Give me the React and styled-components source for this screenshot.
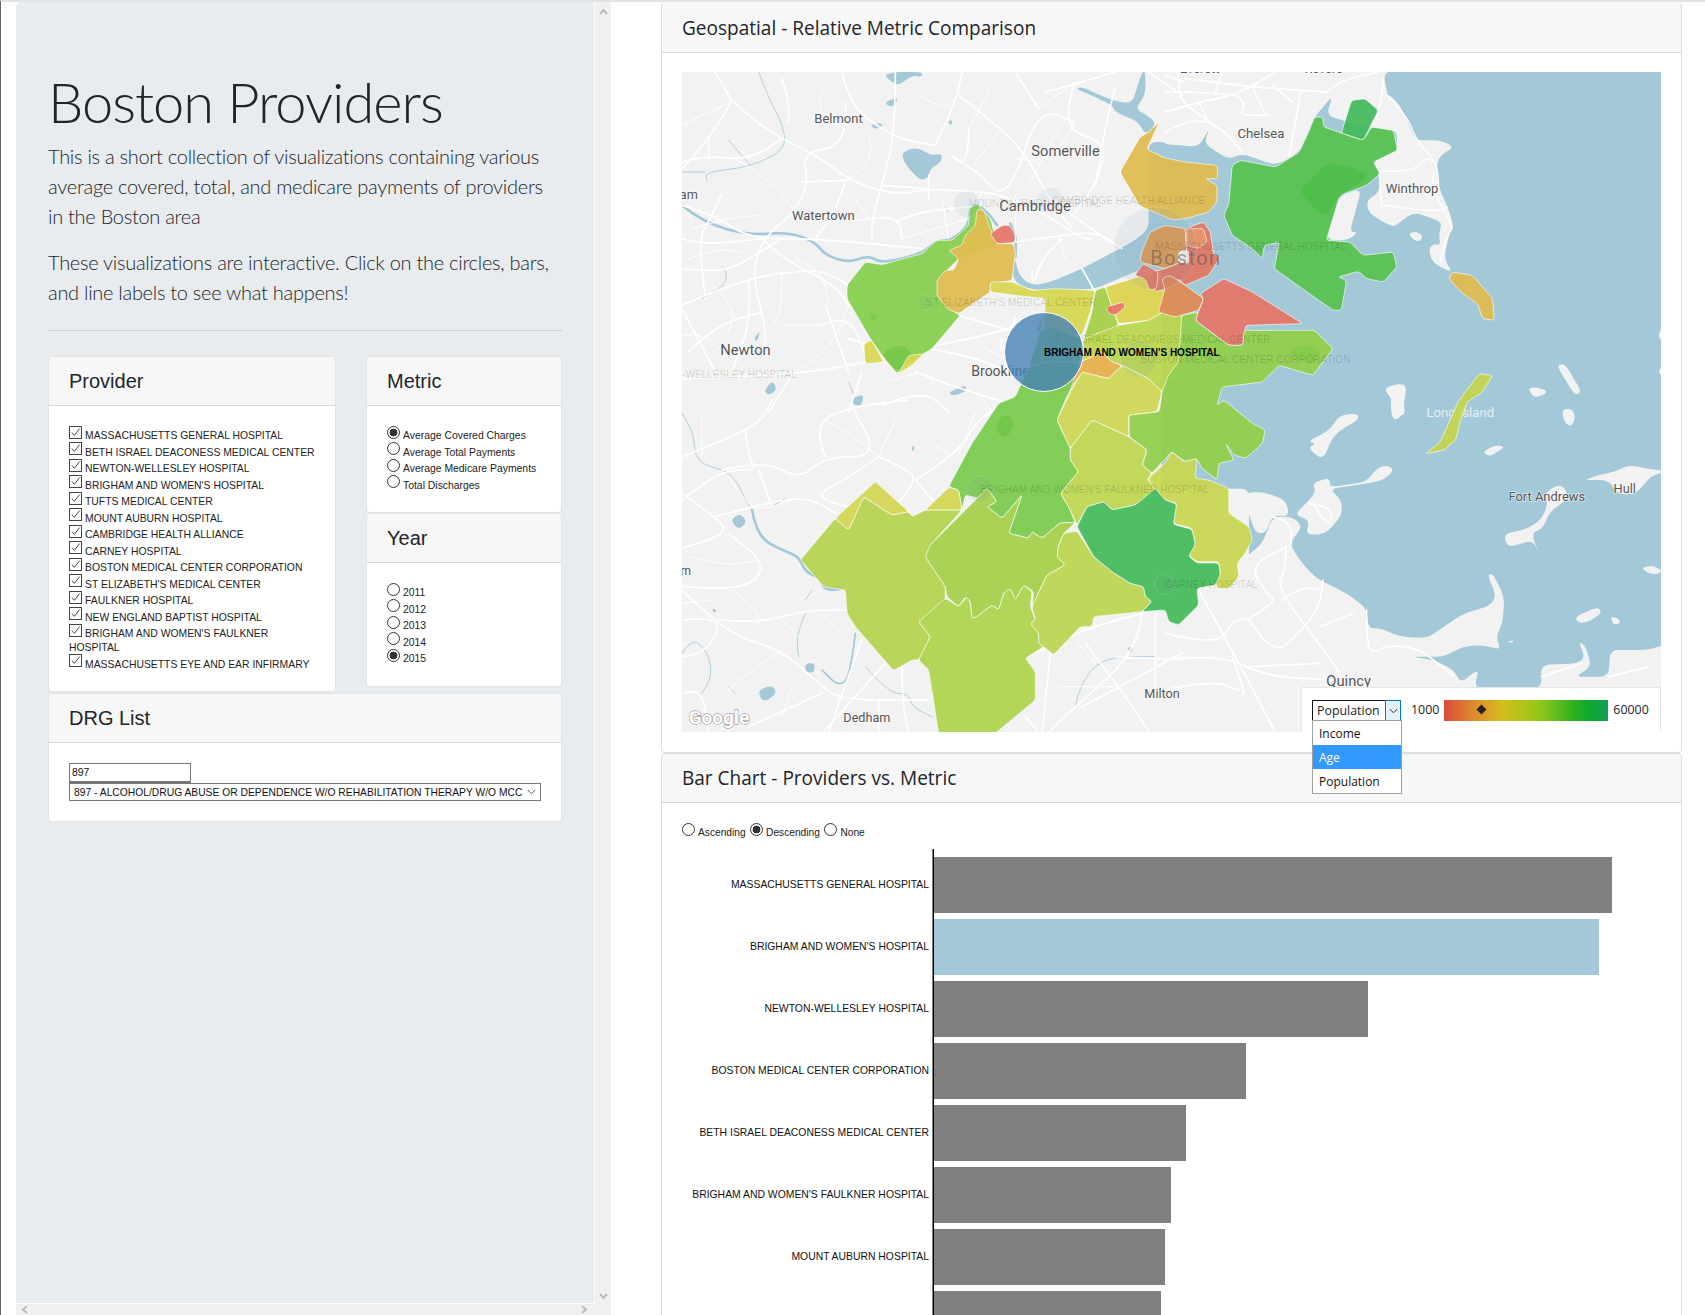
import React from "react";
import styled, { createGlobalStyle } from "styled-components";

const Global = createGlobalStyle`
  html, body { margin: 0; padding: 0; background: #fff; }
  body { font-family: "Liberation Sans", Arial, sans-serif; color: #212529; }
`;

const Page = styled.div`
  display: flex;
  width: 1705px;
  height: 1315px;
  box-sizing: border-box;
  overflow: hidden;
  border-left: 1px solid #666;
  border-top: 2px solid #e3e3e3;
  background: #fff;
`;

const LeftPane = styled.div`
  display: grid;
  grid-template-columns: 579px 16px;
  grid-template-rows: 1302px 11px;
  margin-left: 15px;
  flex: none;
`;

const Jumbotron = styled.div`
  background: #e9ecef;
  border-right: 1px solid #fff;
  border-bottom: 1px solid #fff;
  border-top-left-radius: 5px;
  padding: 66px 32px 0;
  box-sizing: border-box;
  min-width: 0;
`;

const Title = styled.h1`
  margin: 0;
  font-family: Lato, sans-serif;
  font-weight: 300;
  font-size: 56px;
  letter-spacing: -1px;
  line-height: 67px;
  height: 73px;
  color: #212529;
`;

const Lead = styled.p`
  margin: 0 0 16px;
  font-family: Lato, sans-serif;
  font-weight: 300;
  font-size: 20px;
  letter-spacing: -0.28px;
  line-height: 30px;
  color: #212529;
`;

const Rule = styled.hr`
  border: 0;
  border-top: 1px solid #cdd1d5;
  margin: 23px 0 25px;
`;

const Columns = styled.div`
  display: grid;
  grid-template-columns: 288px 196px;
  column-gap: 30px;
  align-items: start;
  margin-bottom: 1px;
`;

const Stack = styled.div`
  display: flex;
  flex-direction: column;
`;

const Card = styled.section`
  background: #fff;
  border: 1px solid rgba(0, 0, 0, 0.11);
  border-radius: 4px;
  box-sizing: border-box;
`;

const CardHead = styled.header`
  background: #f7f7f7;
  border-bottom: 1px solid rgba(0, 0, 0, 0.125);
  height: 48px;
  padding: ${(p) => (p.$tall ? "2px 20px 0" : "0 20px")};
  margin-top: ${(p) => (p.$tall ? "-1px" : "0")};
  display: flex;
  align-items: center;
  font-family: ${(p) => (p.$segoe ? '"Open Sans", sans-serif' : '"Liberation Sans", sans-serif')};
  font-size: ${(p) => (p.$segoe ? "19.05px" : "20px")};
  border-top-left-radius: 3px;
  border-top-right-radius: 3px;
  color: #212529;
`;

const CardBody = styled.div`
  padding: 20px;
`;

const OptionRow = styled.div`
  font-size: 10.4px;
  line-height: 14px;
  margin-right: -2px;
  color: #222;
`;

const Box = styled.span`
  display: inline-block;
  width: 13px;
  height: 13px;
  box-sizing: border-box;
  border: 1px solid #444;
  background: #fff;
  margin: -0.5px 3px 0 0;
  position: relative;
  svg { position: absolute; left: 0; top: 0; display: block; }
`;

const Radio = styled.span`
  display: inline-block;
  width: 13px;
  height: 13px;
  box-sizing: border-box;
  border: 1px solid #333;
  border-radius: 50%;
  background: ${(p) => (p.$on ? "radial-gradient(circle, #333 0 3.6px, #fff 4.2px)" : "#fff")};
  margin: -0.5px 3px 0 0;
`;

const TextInput = styled.input`
  display: block;
  width: 122px;
  height: 20px;
  box-sizing: border-box;
  border: 1px solid #767676;
  border-bottom-width: 2px;
  padding: 0 2px;
  font: 10.4px "Liberation Sans", sans-serif;
  color: #111;
  outline: 0;
`;

const FakeSelect = styled.div`
  display: flex;
  align-items: center;
  justify-content: space-between;
  width: 472px;
  height: 18px;
  box-sizing: border-box;
  border: 1px solid #767676;
  padding: 0 4px;
  font-size: 10.3px;
  white-space: nowrap;
  color: #111;
`;

const VScroll = styled.div`
  background: #f0f0f0;
  display: flex;
  flex-direction: column;
  justify-content: space-between;
  align-items: center;
  padding: 6px 0 4px;
  box-sizing: border-box;
`;

const HScroll = styled.div`
  grid-column: 1 / span 2;
  background: #f0f0f0;
  display: flex;
  justify-content: space-between;
  align-items: center;
  padding: 0 23px 0 5px;
  height: 11px;
  box-sizing: border-box;
`;

const RightPane = styled.div`
  margin-left: 50px;
  width: 1021px;
  flex: none;
  display: flex;
  flex-direction: column;
`;

const ChartCard = styled(Card)`
  border-color: rgba(0, 0, 0, 0.13);
`;

const MapFrame = styled.div`
  position: relative;
  width: 979px;
  height: 660px;
  margin-top: -1px;
  background: #f2f2f2;
  svg { display: block; }
`;

const Town = styled.text`
  font-family: Roboto, sans-serif;
  font-size: ${(p) => p.$s || 36}px;
  letter-spacing: ${(p) => p.$ls || 0}px;
  fill: ${(p) => p.$c || "#555"};
  paint-order: stroke;
  stroke: ${(p) => (p.$halo === false ? "none" : "rgba(255,255,255,.6)")};
  stroke-width: 5px;
`;

const Ghost = styled.text`
  font-family: "Liberation Sans", sans-serif;
  font-size: 30px;
  letter-spacing: 0.1px;
  fill: rgba(0, 0, 0, 0.16);
`;

const MainLabel = styled.text`
  font-family: "Liberation Sans", sans-serif;
  font-weight: 700;
  font-size: 10px;
  fill: #000;
`;

const Legend = styled.div`
  position: absolute;
  right: 0;
  bottom: 0;
  width: 360px;
  height: 45px;
  box-sizing: border-box;
  background: #fff;
  border: 1px solid #e6e6e6;
  border-bottom: 0;
  padding: 12px 0 0 10px;
  display: flex;
  align-items: flex-start;
  font-family: "Open Sans", sans-serif;
  font-size: 12.4px;
  color: #222;
`;

const PickWrap = styled.div`
  position: relative;
  width: 89px;
  margin-right: 10px;
`;

const Pick = styled.div`
  display: flex;
  height: 21px;
  box-sizing: border-box;
  border: 1px solid #111;
  line-height: 20px;
`;

const PickText = styled.span`
  flex: 1;
  padding-left: 4px;
`;

const PickArrow = styled.span`
  width: 16px;
  margin: -1px -1px -1px 0;
  box-sizing: border-box;
  border: 1px solid #0078d7;
  background: #e5f1fb;
  display: flex;
  align-items: center;
  justify-content: center;
`;

const DropList = styled.ul`
  position: absolute;
  left: 0;
  top: 20px;
  margin: 0;
  padding: 0;
  width: 90px;
  box-sizing: border-box;
  border: 1px solid #a0a0a0;
  background: #fff;
  list-style: none;
  z-index: 3;
`;

const DropItem = styled.li`
  height: 24px;
  line-height: 25px;
  padding-left: 6px;
  font-size: 12px;
  background: ${(p) => (p.$on ? "#3399ff" : "#fff")};
  color: ${(p) => (p.$on ? "#fff" : "#111")};
`;

const LegendValue = styled.span`
  line-height: 19px;
  margin-right: ${(p) => p.$gap}px;
`;

const Ramp = styled.div`
  position: relative;
  width: 164px;
  height: 21px;
  margin-right: 5px;
  background: linear-gradient(to right, #de4b3b 0%, #dc8a2c 18%, #d3bf1b 36%, #93c71c 58%, #2cb01e 80%, #10a92a 88%, #0e9f58 100%);
`;

const Diamond = styled.span`
  position: absolute;
  left: 34px;
  top: 6px;
  width: 7px;
  height: 7px;
  background: #222;
  transform: rotate(45deg);
`;

const SortRow = styled.div`
  display: flex;
  gap: 4.5px;
  font-size: 10.2px;
  line-height: 14px;
  height: 17px;
  color: #222;
`;

const ChartSvg = styled.svg`
  display: block;
  margin-top: 9px;
  overflow: hidden;
`;

const BarLabel = styled.text`
  font-family: "Liberation Sans", sans-serif;
  font-size: 10.4px;
  fill: #111;
`;

const Arrow = ({ d }) => (
  <svg width="9" height="7" viewBox="0 0 9 7">
    <path d={d} fill="none" stroke="#bdbdbd" strokeWidth="2" />
  </svg>
);

const Tick = () => (
  <svg width="11" height="11" viewBox="0 0 11 11">
    <path d="M1.8 5.6 L4.4 8.3 L9.6 1.6" fill="none" stroke="#444" strokeWidth="1" />
  </svg>
);

const Chevron = ({ c = "#333" }) => (
  <svg width="9" height="6" viewBox="0 0 9 6">
    <path d="M.8 1 L4.5 4.8 L8.2 1" fill="none" stroke={c} strokeWidth="1" />
  </svg>
);

const providers = [
  "MASSACHUSETTS GENERAL HOSPITAL",
  "BETH ISRAEL DEACONESS MEDICAL CENTER",
  "NEWTON-WELLESLEY HOSPITAL",
  "BRIGHAM AND WOMEN'S HOSPITAL",
  "TUFTS MEDICAL CENTER",
  "MOUNT AUBURN HOSPITAL",
  "CAMBRIDGE HEALTH ALLIANCE",
  "CARNEY HOSPITAL",
  "BOSTON MEDICAL CENTER CORPORATION",
  "ST ELIZABETH'S MEDICAL CENTER",
  "FAULKNER HOSPITAL",
  "NEW ENGLAND BAPTIST HOSPITAL",
  "BRIGHAM AND WOMEN'S FAULKNER HOSPITAL",
  "MASSACHUSETTS EYE AND EAR INFIRMARY",
];
const metrics = ["Average Covered Charges", "Average Total Payments", "Average Medicare Payments", "Total Discharges"];
const years = ["2011", "2012", "2013", "2014", "2015"];
const bars = [
  ["MASSACHUSETTS GENERAL HOSPITAL", 1612],
  ["BRIGHAM AND WOMEN'S HOSPITAL", 1599, true],
  ["NEWTON-WELLESLEY HOSPITAL", 1368],
  ["BOSTON MEDICAL CENTER CORPORATION", 1246],
  ["BETH ISRAEL DEACONESS MEDICAL CENTER", 1186],
  ["BRIGHAM AND WOMEN'S FAULKNER HOSPITAL", 1171],
  ["MOUNT AUBURN HOSPITAL", 1165],
  ["", 1161],
];

const T = {
  nw: "scale(.33333)",
  ne: "translate(483 0) scale(.336 .33333)",
  sw: "translate(0 328) scale(.33333)",
  se: "translate(483 328) scale(.336 .33333)",
};

const WATER = "#a3c9d8";
const LAND = "#f2f2f2";

const parse = (s) => s.trim().split(/\s+/).map((p) => p.split(",").map(Number));

/* closed outline with its corners rounded by at most r units */
const outline = (s, r) => {
  const pts = parse(s);
  const n = pts.length;
  let d = "";
  pts.forEach((p, i) => {
    const a = pts[(i + n - 1) % n];
    const b = pts[(i + 1) % n];
    const la = Math.hypot(a[0] - p[0], a[1] - p[1]) || 1;
    const lb = Math.hypot(b[0] - p[0], b[1] - p[1]) || 1;
    const ra = Math.min(r, la * 0.45) / la;
    const rb = Math.min(r, lb * 0.45) / lb;
    const s0 = [p[0] + (a[0] - p[0]) * ra, p[1] + (a[1] - p[1]) * ra];
    const s1 = [p[0] + (b[0] - p[0]) * rb, p[1] + (b[1] - p[1]) * rb];
    d += `${i ? "L" : "M"}${s0[0]},${s0[1]} Q${p[0]},${p[1]} ${s1[0]},${s1[1]} `;
  });
  return d + "Z";
};

/* open polylines "M.. L.. M.." turned into soft curves */
const soften = (s) =>
  s
    .split("M")
    .filter((x) => x.trim())
    .map((seg) => {
      const pts = seg.trim().split(/\s*L\s*/).map((p) => p.split(",").map(Number));
      let d = `M${pts[0][0]},${pts[0][1]} `;
      for (let i = 1; i < pts.length - 1; i++) {
        const m = [(pts[i][0] + pts[i + 1][0]) / 2, (pts[i][1] + pts[i + 1][1]) / 2];
        d += `Q${pts[i][0]},${pts[i][1]} ${m[0]},${m[1]} `;
      }
      const e = pts[pts.length - 1];
      return d + `L${e[0]},${e[1]}`;
    })
    .join(" ");

const waterShapes = [
  ["ne", "650,0 1600,-100 1600,2100 250,2100 250,1250 -10,1250 -10,215 100,225 135,165 115,215 190,262 230,245 330,280 400,240 430,170 445,135 500,70 480,130 610,170 680,175 700,190 660,60"],
  ["nw", "1400,210 1460,210 1460,600 1380,590 1240,650 1100,660 1020,645 990,615 998,550 1005,590 1020,620 1050,640 1100,632 1200,590 1360,505 1400,470"],
  ["nw", "1180,50 1240,75 1290,100 1300,120 1370,150 1390,190 1425,155 1395,130 1360,110 1390,70 1390,0 1380,0 1350,95 1290,85 1200,45"],
  ["nw", "660,240 705,225 745,250 780,245 778,270 745,290 738,318 715,325 690,300 665,270"],
  ["nw", "610,90 650,75 635,105 615,100"],
  ["nw", "565,158 600,152 598,168 575,170"],
  ["nw", "605,10 640,0 720,0 720,15 690,10 650,40 630,30"],
  ["nw", "245,960 270,925 285,950 265,970"],
  ["nw", "510,980 545,965 540,1000 515,1000"],
  ["nw", "800,960 855,938 850,960 810,972"],
  ["nw", "215,800 235,775 225,810"],
  ["nw", "800,145 810,145 810,158 800,156"],
  ["sw", "145,360 175,340 195,365 170,390"],
  ["sw", "230,870 270,855 285,880 250,905 235,895"],
  ["sw", "370,790 400,790 395,820 370,815"],
  ["sw", "405,535 425,565 470,550 490,570 430,575"],
  ["sw", "1335,740 1355,745 1345,760"],
  ["sw", "90,625 105,630 95,640"],
  ["sw", "690,135 700,145 690,155"],
];

const landShapes = [
  ["ne", "660,60 700,100 740,190 750,205 820,205 862,225 820,250 808,280 815,350 840,400 860,465 845,490 830,560 855,600 830,590 795,570 785,530 800,515 820,520 815,485 825,450 740,420 700,450 680,465 640,445 605,420 600,385 640,360 635,300 620,290 620,270 690,235 690,175 650,165 620,165 650,100"],
  ["ne", "520,370 585,350 550,480 575,480 545,505 480,505"],
  ["ne", "725,485 745,478 768,490 760,508 740,505"],
  ["ne", "650,950 690,935 720,940 710,1000 715,1030 680,1030 675,980"],
  ["ne", "1165,880 1190,875 1240,960 1220,970"],
  ["ne", "1080,950 1100,945 1145,958 1100,980"],
  ["ne", "1470,780 1490,755 1490,810 1470,800"],
  ["ne", "1490,865 1465,900 1490,920"],
  ["se", "672,-10 708,-10 705,50 680,62 672,30"],
  ["se", "1180,30 1210,25 1222,50 1210,80 1190,70"],
  ["se", "425,125 490,90 520,45 575,40 575,60 530,85 500,110 470,180 425,145 450,130"],
  ["se", "945,155 985,135 1012,140 990,155 965,170"],
  ["se", "437,250 490,232 490,262 600,245 630,205 660,195 683,210 650,240 605,250 490,267 525,300 527,345 480,400 440,405 420,400 430,360 385,345 420,310 450,275"],
  ["se", "228,280 290,275 360,300 370,350 320,345 300,400 270,400"],
  ["se", "100,565 170,570 230,530 230,480 290,430 320,350 380,350 410,380 370,430 400,480 450,535 540,580 600,625 605,685 640,685 700,710 780,715 830,680 880,645 970,615 985,585 960,525 975,520 1010,590 1005,670 985,710 1000,750 945,735 885,740 830,770 730,770 800,780 860,810 880,850 935,805 920,865 1120,865 1120,795 1230,790 1250,770 1230,725 1250,735 1270,800 1220,830 1320,830 1325,750 1440,750 1500,730 1500,1010 -10,1010 -10,670 40,670 95,630 125,615"],
  ["se", "1250,240 1290,225 1340,215 1380,195 1430,205 1500,215 1450,225 1420,260 1400,280 1350,285 1320,240 1270,240"],
  ["se", "1010,400 1070,390 1120,360 1140,310 1130,280 1170,252 1195,270 1195,300 1145,335 1125,385 1090,400 1115,465 1095,420 1030,440 1015,430"],
  ["se", "1415,505 1450,495 1485,515 1450,525"],
  ["se", "1220,650 1290,620 1300,640 1260,665 1230,670"],
  ["se", "1325,650 1350,655 1355,670 1335,675"],
  ["se", "1017,725 1040,720 1030,730"],
  ["se", "1470,270 1500,265 1500,290"],
];

const rivers = [
  ["nw", 8, "M0,400 L60,450 L200,490 L320,480 L400,510 L430,550 L500,572 L560,550 L600,575 L720,545 L765,505 L810,505 L860,460 L862,410 L885,395 L925,430 L945,460 M985,455 L1003,490 L1000,555"],
  ["nw", 2.5, "M230,0 L260,80 L300,150 L315,230 L205,285 L70,300 L75,325 M140,205 L205,280 M0,300 L70,300 M125,590 L150,625 L60,680 M800,420 L780,400 M500,930 L520,980"],
  ["sw", 8, "M210,330 L225,410 L300,450 L350,470 L370,515 L405,530"],
  ["sw", 5, "M520,700 L505,830 L470,860 L420,810"],
  ["sw", 2.5, "M0,40 L35,90 L40,190 L150,215 L190,300 L210,330 M350,770 L340,720 L370,640 M0,760 L30,710 L80,760 L90,830 L60,880 M550,800 L620,880 L680,880 L690,920 L750,950 M1180,920 L1190,860 L1260,770 L1420,770 M160,880 L140,860 M370,600 L390,570 M270,320 L310,295"],
  ["se", 2.5, "M110,630 L160,720 M510,640 L560,600 L590,640 M540,680 L590,670 M830,730 L940,710 M320,380 L370,420 M400,350 L430,390"],
];

const roads = [
  ["nw", 5, "M100,0 L140,70 L150,90 L100,170 L30,260 L0,290 M140,75 L220,150 L300,200 L420,260 L500,325 L640,370 L740,350 L900,360 L960,370 L1080,420 L1200,500 L1230,500 M0,270 L70,250 L200,265 L300,200 M0,400 L100,430 L200,500 L400,500 L720,530 M0,700 L180,620 L400,590 L470,620 L500,640 M0,590 L100,600 L170,580 L300,500 M490,90 L500,220 L360,240 L380,330 L340,420 L240,500 L210,610 L250,760 L250,840 M480,0 L500,100 L640,200 L760,220 M640,0 L640,180 L600,340 L570,440 L570,500 M490,330 L460,420 L400,500 M120,365 L85,440 L50,500 L70,680 M240,500 L300,560 L460,640 L500,700 M0,710 L100,900 M0,920 L330,910 L560,870 L720,830 L1000,770 L1090,720 M330,910 L260,1020 M200,620 L210,740 L150,900 M830,70 L960,170 L1040,260 L1100,380 L1170,470 M840,0 L830,70 L760,220 M860,170 L860,290 L790,240 L900,310 L950,370 L1000,320 L1070,110 L1180,150 M1000,0 L1070,110 M1090,60 L1200,30 L1300,0 M1180,30 L1130,170 L1280,210 L1240,340 L1180,420 M1300,50 L1280,110 L1240,340 M1100,380 L1300,520 M1000,510 L1130,490 L1250,480 L1320,530 M1200,590 L1240,660 L1270,720 M1050,600 L1050,650 L1080,560 L1140,500 M700,900 L800,940 L1000,1000 M830,730 L1000,780 M740,830 L860,850 L980,900 M960,800 L950,870 L1000,740 M500,1020 L540,900 M430,700 L500,900 M300,20 L320,80 L320,150 M600,340 L740,350 M640,450 L700,420 L900,400 M570,440 L650,430 L660,500 M740,310 L740,380 M1400,0 L1500,70 M0,500 L60,520 L240,500 M500,800 L700,860 M80,200 L80,260 M360,330 L500,325 M20,840 L100,760 L240,720 M420,760 L500,720 L560,870 M600,1000 L720,950 L800,1020"],
  ["nw", 3, "M0,160 L60,130 L150,90 M160,260 L260,320 L340,420 M30,470 L130,440 L230,430 M20,560 L100,530 L180,540 M300,590 L300,720 L270,760 M340,560 L420,590 L440,700 M90,640 L160,700 L140,780 M0,790 L60,780 L130,850 M300,760 L420,760 M420,60 L400,130 L490,170 M560,190 L580,250 L500,325 M700,60 L780,120 L830,70 M920,60 L860,170 M960,170 L880,270 M1000,260 L1100,280 L1180,150 M1070,110 L1180,30 M1040,340 L1130,170 M1000,510 L1000,370 M1130,490 L1150,560 M780,380 L800,500 M660,500 L760,470 L860,440 M900,360 L860,460 M520,380 L560,440 M420,420 L520,450 L570,440 M500,700 L470,800 L360,890 M620,930 L720,890 L760,940 M880,950 L930,1020 M880,800 L930,850 L1000,860 M1100,800 L1000,860"],
  ["ne", 5, "M0,120 L100,90 L210,70 L330,0 M40,0 L40,60 L60,100 L180,180 L230,240 M0,60 L210,60 L240,100 L220,130 L320,130 M60,20 L260,45 L400,55 L480,60 M405,55 L370,250 M320,40 L380,90 M650,20 L640,120 L610,165 M0,10 L60,30"],
  ["ne", 4, "M620,295 L730,305 L780,255 L800,270 M650,400 L800,420 L840,405 M800,300 L790,350 L830,410 L855,470 M640,330 L645,400 M660,70 L720,130 L750,210 L810,270 L815,350 M840,490 L820,565 M0,180 L90,130 L180,180 M170,0 L150,60 M260,45 L300,130 M100,90 L130,150 M480,60 L530,20 L640,0"],
  ["sw", 5, "M0,170 L100,130 L190,90 L240,60 L270,0 M190,90 L200,180 L230,210 L120,210 L0,300 M0,280 L100,350 L140,400 L0,445 M100,350 L250,310 L380,290 L460,340 M230,210 L270,320 M120,210 L250,180 L350,240 L430,170 L590,170 L510,20 M590,170 L680,210 L700,240 L650,310 M590,170 L490,240 L390,290 L530,330 M700,240 L760,310 M700,240 L830,160 L890,50 L1000,0 M430,170 L390,70 L510,20 L680,0 M0,560 L140,570 L230,540 L240,480 L140,400 M0,570 L130,700 L300,750 L420,860 L480,900 L740,900 M110,660 L230,670 L370,630 L500,630 M0,660 L100,650 L110,700 L60,760 L0,770 M540,720 L480,880 L440,1000 M610,790 L420,1000 M660,790 L660,900 L680,1000 M1030,770 L1110,740 L1200,690 L1380,640 M1105,760 L1080,996 M1210,730 L1340,900 L1400,996 M1380,640 L1370,750 L1180,920 L1100,996 M1200,920 L1500,760 M1420,640 L1420,870 M1030,950 L1070,996 M200,980 L420,880 M590,900 L590,996 M0,880 L60,860 L80,996 M1300,770 L1500,780"],
  ["sw", 3, "M60,40 L60,170 M140,230 L200,330 L270,320 M30,470 L130,500 L230,480 M0,610 L100,600 M150,570 L220,620 L230,670 M290,650 L360,720 M270,320 L330,300 M430,60 L500,100 L590,170 M640,60 L590,170 M750,130 L800,160 M880,40 L830,160 M300,750 L180,830 L120,890 M330,860 L300,950 M420,640 L480,700 M880,900 L1000,996 M1130,860 L1300,860 M1240,790 L1180,720"],
  ["se", 5, "M100,570 L210,770 L330,1000 M0,700 L160,740 L200,660 L250,660 L330,600 L310,590 L250,500 L360,440 M250,660 L320,770 L400,700 L460,620 L470,540 M0,780 L160,760 L300,830 L520,840 M360,440 L360,510 L330,560 L480,760 L520,820 M200,770 L240,880 L230,880 M350,600 L400,560 L470,570 M0,870 L130,840 L220,870 M600,630 L600,730 L620,760 L660,735 L750,745 L800,780 L860,830 M460,680 L560,640 M430,310 L500,320 L490,380 L460,340 L440,310 M320,350 L375,365 L375,430 M250,800 L460,790 M1320,830 L1440,800 M1120,830 L1240,790"],
];

const regions = [
  ["nw", "#88cf4f", "495,640 550,570 600,578 720,545 765,505 810,505 860,460 862,410 885,395 925,440 945,515 830,560 770,620 765,670 800,710 835,730 750,830 700,860 645,905 600,850 565,800 495,680"],
  ["nw", "#78c74a", "600,850 625,825 670,820 700,860 645,900", true],
  ["nw", "#7cc94c", "560,730 590,725 575,750", true],
  ["nw", "#dfbc52", "885,410 905,415 925,470 945,515 995,515 1000,545 990,625 925,635 925,660 880,690 830,725 795,710 765,670 765,625 790,595 815,595 830,560 800,535 840,520 850,490 880,460"],
  ["nw", "#e5786a", "925,485 960,460 985,460 1000,490 998,512 945,515"],
  ["nw", "#d6d652", "925,630 990,630 1050,655 1120,650 1240,655 1225,720 1200,790 1085,790 1090,680 1000,670 925,660"],
  ["nw", "#d8d752", "545,815 570,805 605,870 550,875"],
  ["nw", "#d8d752", "650,905 680,850 725,845 690,880"],
  ["nw", "#a6cf4a", "1240,655 1270,645 1285,690 1310,760 1250,810 1205,800 1230,720"],
  ["nw", "#dcd24f", "1270,645 1400,605 1470,650 1460,710 1400,745 1310,755 1285,690"],
  ["nw", "#e5786a", "1272,705 1325,690 1330,705 1300,730 1280,725"],
  ["nw", "#bbd64e", "1205,800 1310,760 1400,745 1460,710 1500,730 1500,910 1460,920 1440,960 1400,920 1320,880 1290,870 1260,840 1195,870"],
  ["nw", "#e5b04c", "1195,870 1260,840 1290,870 1320,880 1280,920 1200,900 1165,955 1100,970"],
  ["nw", "#8fce4e", "1090,725 1040,820 1060,780 1115,765 1200,800 1195,870 1100,880 1040,885"],
  ["ne", "#dfbc52", "-134,300 -74,195 -49,180 -17,150 -54,232 0,258 60,270 155,280 158,320 120,320 155,340 155,390 130,420 60,440 24,444 -75,402"],
  ["ne", "#dd9a55", "-69,540 -44,480 0,460 60,470 65,540 45,535 50,570 0,590 -75,570"],
  ["ne", "#e37966", "60,470 115,450 135,480 145,550 165,555 130,610 60,640 40,620 10,650 -30,660 -40,600 0,590 50,570 65,540"],
  ["ne", "#e59668", "65,470 115,470 125,510 100,530 65,520"],
  ["ne", "#e37966", "-90,610 -65,575 -20,600 -25,650 -45,655 -60,620"],
  ["ne", "#f2f2f2", "40,540 70,535 70,575 40,570"],
  ["ne", "#df8a55", "15,610 60,640 115,680 100,715 30,735 -20,720 0,650 -10,620"],
  ["ne", "#e5776a", "90,745 115,680 105,665 175,620 260,660 410,755 240,760 232,820 190,820"],
  ["ne", "#5ac351", "445,135 470,135 472,165 590,205 615,165 680,175 692,235 620,270 640,305 600,340 520,370 480,505 550,510 590,550 680,540 690,585 650,630 600,620 575,598 515,615 540,625 525,715 500,715 325,590 340,510 295,520 290,560 260,530 200,490 175,430 190,395 200,280 225,265 330,285 400,240 430,175"],
  ["ne", "#4fbe4b", "400,355 480,275 560,285 610,310 520,370 480,430 450,420", true],
  ["ne", "#46bb5e", "525,183 555,85 595,80 635,115 590,205"],
  ["ne", "#dfbc52", "845,620 855,600 915,610 975,680 980,745 945,740 930,695 880,660"],
  ["ne", "#c3d550", "775,1146 820,1109 850,1040 875,985 935,905 975,910 945,960 900,990 880,1044 865,1104 830,1134"],
  ["ne", "#94cf4d", "50,730 100,720 90,745 190,820 232,820 235,775 445,775 500,830 440,910 340,880 290,930 170,945 155,1000 175,984 260,1054 298,1074 290,1114 240,1159 205,1149 180,1114 205,1164 160,1174 155,1224 110,1189 95,1159 60,1169 20,1139 -39,1204 -68,1179 -53,1134 -107,1094 -107,1029 -17,1019 -9,960 10,910 40,870"],
  ["ne", "#86ca4b", "370,830 430,815 465,840 440,880 385,860", true],
  ["sw", "#7ccb4f", "950,10 1000,-10 1040,-99 1100,-114 1195,-114 1165,-29 1150,0 1125,60 1165,145 1165,180 1190,215 1135,280 1160,320 1180,368 1135,368 1080,415 1050,395 1040,415 980,400 1020,285 960,355 915,320 945,305 915,265 890,295 850,285 840,330 830,270 800,260 870,130"],
  ["sw", "#72c648", "945,60 975,40 998,70 975,115 945,100", true],
  ["sw", "#b5d451", "355,480 460,355 500,390 545,290 630,345 680,335 690,350 730,330 840,330 750,430 730,470 790,560 790,600 710,665 745,710 710,780 690,780 635,812 520,680 495,640 490,570 425,560 395,525"],
  ["sw", "#d4d654", "460,355 580,245 680,335 630,345 545,290 500,390"],
  ["sw", "#d4d654", "730,330 800,262 830,270 840,330"],
  ["sw", "#a5d14d", "745,435 880,300 915,265 945,305 915,320 960,355 1020,285 980,400 1040,415 1050,395 1080,415 1135,368 1180,368 1145,400 1130,435 1125,470 1150,495 1095,525 1050,620 1055,575 1025,555 1000,600 985,565 965,580 950,630 930,615 885,650 870,655 865,605 850,590 830,620 795,590 790,560 730,470"],
  ["sw", "#add44f", "790,595 830,620 855,590 865,610 870,655 885,650 930,615 950,630 965,580 985,565 1000,600 1025,555 1050,575 1045,620 1060,660 1045,670 1070,700 1070,730 1085,740 1030,775 1060,815 1060,900 940,1000 770,1000 740,810 710,780 745,710 710,665"],
  ["sw", "#bcd652", "1145,400 1185,393 1235,470 1290,515 1345,550 1385,560 1390,590 1410,605 1380,635 1235,650 1230,680 1195,680 1115,765 1085,740 1070,730 1070,700 1045,670 1060,660 1050,620 1095,525 1150,495 1125,470 1130,435"],
  ["sw", "#cdd755", "1165,-24 1200,-84 1280,-64 1320,-104 1400,-64 1440,-24 1425,35 1340,45 1340,110 1230,60 1165,145 1125,60"],
  ["sw", "#bed651", "1165,145 1230,60 1340,110 1395,150 1380,195 1410,220 1395,240 1430,265 1360,315 1290,330 1265,305 1215,320 1185,375 1160,320 1135,280 1190,215 1165,180"],
  ["se", "#c9d653", "-50,235 0,190 20,155 50,180 60,185 95,175 90,235 130,240 190,265 190,340 250,380 260,420 235,465 215,490 220,530 190,565 160,565 150,550 165,520 160,485 95,485 70,465 90,430 80,385 25,370 35,310 0,300 -30,270"],
  ["sw", "#47bb5d", "1185,380 1215,320 1265,305 1290,330 1360,315 1420,265 1449,300 1484,312 1474,373 1530,388 1540,433 1520,469 1545,489 1610,489 1615,524 1600,555 1545,565 1550,615 1490,675 1460,665 1450,630 1380,635 1410,605 1390,590 1385,560 1345,550 1290,515 1235,470"],
];

const ghostCircles = [
  ["nw", 855, 396, 40],
  ["nw", 1105, 385, 38],
  ["nw", 1420, 530, 125],
  ["nw", 728, 692, 22],
  ["nw", 1370, 862, 55],
  ["sw", 893, 268, 40],
  ["sw", 1447, 553, 30],
];

const ghosts = [
  ["nw", 860, 406, "MOUNT AUBURN HOSPITAL"],
  ["nw", 1110, 395, "CAMBRIDGE HEALTH ALLIANCE"],
  ["nw", 733, 702, "ST ELIZABETH'S MEDICAL CENTER"],
  ["nw", 1420, 534, "MASSACHUSETTS GENERAL HOSPITAL"],
  ["nw", 1100, 813, "BETH ISRAEL DEACONESS MEDICAL CENTER"],
  ["nw", 1375, 872, "BOSTON MEDICAL CENTER CORPORATION"],
  ["nw", -133, 917, "NEWTON-WELLESLEY HOSPITAL"],
  ["sw", 895, 278, "BRIGHAM AND WOMEN'S FAULKNER HOSPITAL"],
  ["sw", 1447, 563, "CARNEY HOSPITAL"],
];

const towns = [
  ["nw", 397, 153, "Belmont", 39],
  ["nw", 1048, 252, "Somerville", 44],
  ["nw", -103, 380, "Waltham", 38],
  ["nw", 952, 417, "Cambridge", 44],
  ["nw", 330, 445, "Watertown", 39],
  ["nw", 115, 848, "Newton", 44],
  ["nw", 868, 912, "Brookline", 42],
  ["ne", 216, 198, "Chelsea", 39],
  ["ne", 657, 363, "Winthrop", 39],
  ["ne", 45, 3, "Everett", 38],
  ["ne", 415, 3, "Revere", 38],
  ["se", 1022, 303, "Fort Andrews", 38.5],
  ["se", 1335, 278, "Hull", 38],
  ["se", 480, 857, "Quincy", 44],
  ["sw", 1387, 895, "Milton", 38],
  ["sw", 484, 966, "Dedham", 38],
  ["sw", -128, 525, "Needham", 36],
];

const BostonMap = () => (
  <svg width="979" height="660" viewBox="0 0 979 660">
    <rect width="979" height="660" fill={LAND} />
    {waterShapes.map(([t, p], i) => (
      <path key={i} transform={T[t]} d={outline(p, 25)} fill={WATER} />
    ))}
    {rivers.map(([t, w, d], i) => (
      <path key={i} transform={T[t]} d={soften(d)} fill="none" stroke={WATER} strokeWidth={w} strokeLinecap="round" />
    ))}
    {landShapes.map(([t, p], i) => (
      <path key={i} transform={T[t]} d={outline(p, 25)} fill={LAND} />
    ))}
    {roads.map(([t, w, d], i) => (
      <path key={i} transform={T[t]} d={soften(d)} fill="none" stroke="#fff" strokeWidth={w} strokeLinecap="round" />
    ))}
    {towns.map(([t, x, y, s, f]) => (
      <g key={s} transform={T[t]}>
        <Town x={x} y={y} $s={f}>{s}</Town>
      </g>
    ))}
    <g transform={T.se}>
      <Town x={778} y={52} $s={39} $c="#e6eef2" $halo={false}>Long Island</Town>
    </g>
    {regions.map(([t, c, p, patch], i) => (
      <path
        key={i}
        transform={T[t]}
        d={outline(p, patch ? 25 : 8)}
        fill={c}
        fillOpacity=".95"
        stroke={patch ? "none" : "#fff"}
        strokeOpacity=".75"
        strokeWidth="2.5"
      />
    ))}
    <g transform={T.nw}>
      <Town x={1405} y={578} $s={60} $ls={4} $c="rgba(90,80,70,.55)" $halo={false}>Boston</Town>
    </g>
    {ghostCircles.map(([t, x, y, r], i) => (
      <circle key={i} transform={T[t]} cx={x} cy={y} r={r} fill="rgba(110,140,180,.09)" stroke="rgba(255,255,255,.2)" strokeWidth="2" />
    ))}
    {ghosts.map(([t, x, y, s]) => (
      <g key={s} transform={T[t]}>
        <Ghost x={x} y={y}>{s}</Ghost>
      </g>
    ))}
    <g transform={T.sw}>
      <Town x={20} y={972} $s={57} $c="#fff" $halo={false} style={{ stroke: "rgba(90,90,90,.55)", strokeWidth: 4, fontWeight: 700 }}>Google</Town>
    </g>
    <circle cx="362" cy="280" r="39.5" fill="steelblue" fillOpacity=".8" stroke="#fff" strokeWidth="1" />
    <MainLabel x="362" y="284">BRIGHAM AND WOMEN'S HOSPITAL</MainLabel>
  </svg>
);

const BarChart = () => (
  <ChartSvg width="979" height="490" viewBox="0 0 979 490">
    {bars.map(([label, end, hot], i) => (
      <g key={i}>
        <rect x="252" y={8 + 62 * i} width={end - 934} height="56" fill={hot ? "#a3c8d9" : "#808080"} />
        <BarLabel x="247" y={39 + 62 * i} textAnchor="end">{label}</BarLabel>
      </g>
    ))}
    <rect x="250.5" y="0" width="1.5" height="490" fill="#000" />
  </ChartSvg>
);

export default function App() {
  return (
    <>
      <Global />
      <Page>
        <LeftPane>
          <Jumbotron>
            <Title>Boston Providers</Title>
            <Lead>This is a short collection of visualizations containing various average covered, total, and medicare payments of providers in the Boston area</Lead>
            <Lead>These visualizations are interactive. Click on the circles, bars, and line labels to see what happens!</Lead>
            <Rule />
            <Columns>
              <Card>
                <CardHead>Provider</CardHead>
                <CardBody>
                  {providers.map((p) => (
                    <OptionRow key={p}>
                      <Box><Tick /></Box>
                      {p}
                    </OptionRow>
                  ))}
                </CardBody>
              </Card>
              <Stack>
                <Card>
                  <CardHead>Metric</CardHead>
                  <CardBody>
                    {metrics.map((m, i) => (
                      <OptionRow key={m}>
                        <Radio $on={i === 0} />
                        {m}
                      </OptionRow>
                    ))}
                  </CardBody>
                </Card>
                <Card>
                  <CardHead>Year</CardHead>
                  <CardBody>
                    {years.map((y) => (
                      <OptionRow key={y}>
                        <Radio $on={y === "2015"} />
                        {y}
                      </OptionRow>
                    ))}
                  </CardBody>
                </Card>
              </Stack>
            </Columns>
            <Card>
              <CardHead>DRG List</CardHead>
              <CardBody>
                <TextInput defaultValue="897" />
                <FakeSelect>
                  897 - ALCOHOL/DRUG ABUSE OR DEPENDENCE W/O REHABILITATION THERAPY W/O MCC
                  <Chevron c="#555" />
                </FakeSelect>
              </CardBody>
            </Card>
          </Jumbotron>
          <VScroll>
            <Arrow d="M1 6 L4.5 2 L8 6" />
            <Arrow d="M1 1 L4.5 5 L8 1" />
          </VScroll>
          <HScroll>
            <Arrow d="M6 0 L2 3.5 L6 7" />
            <Arrow d="M3 0 L7 3.5 L3 7" />
          </HScroll>
        </LeftPane>
        <RightPane>
          <ChartCard>
            <CardHead $segoe $tall>Geospatial - Relative Metric Comparison</CardHead>
            <CardBody>
              <MapFrame>
                <BostonMap />
                <Legend>
                  <PickWrap>
                    <Pick>
                      <PickText>Population</PickText>
                      <PickArrow><Chevron /></PickArrow>
                    </Pick>
                    <DropList>
                      <DropItem>Income</DropItem>
                      <DropItem $on>Age</DropItem>
                      <DropItem>Population</DropItem>
                    </DropList>
                  </PickWrap>
                  <LegendValue $gap={5}>1000</LegendValue>
                  <Ramp><Diamond /></Ramp>
                  <LegendValue $gap={0}>60000</LegendValue>
                </Legend>
              </MapFrame>
            </CardBody>
          </ChartCard>
          <ChartCard>
            <CardHead $segoe>Bar Chart - Providers vs. Metric</CardHead>
            <CardBody>
              <SortRow>
                <span><Radio />Ascending</span>
                <span><Radio $on />Descending</span>
                <span><Radio />None</span>
              </SortRow>
              <BarChart />
            </CardBody>
          </ChartCard>
        </RightPane>
      </Page>
    </>
  );
}
